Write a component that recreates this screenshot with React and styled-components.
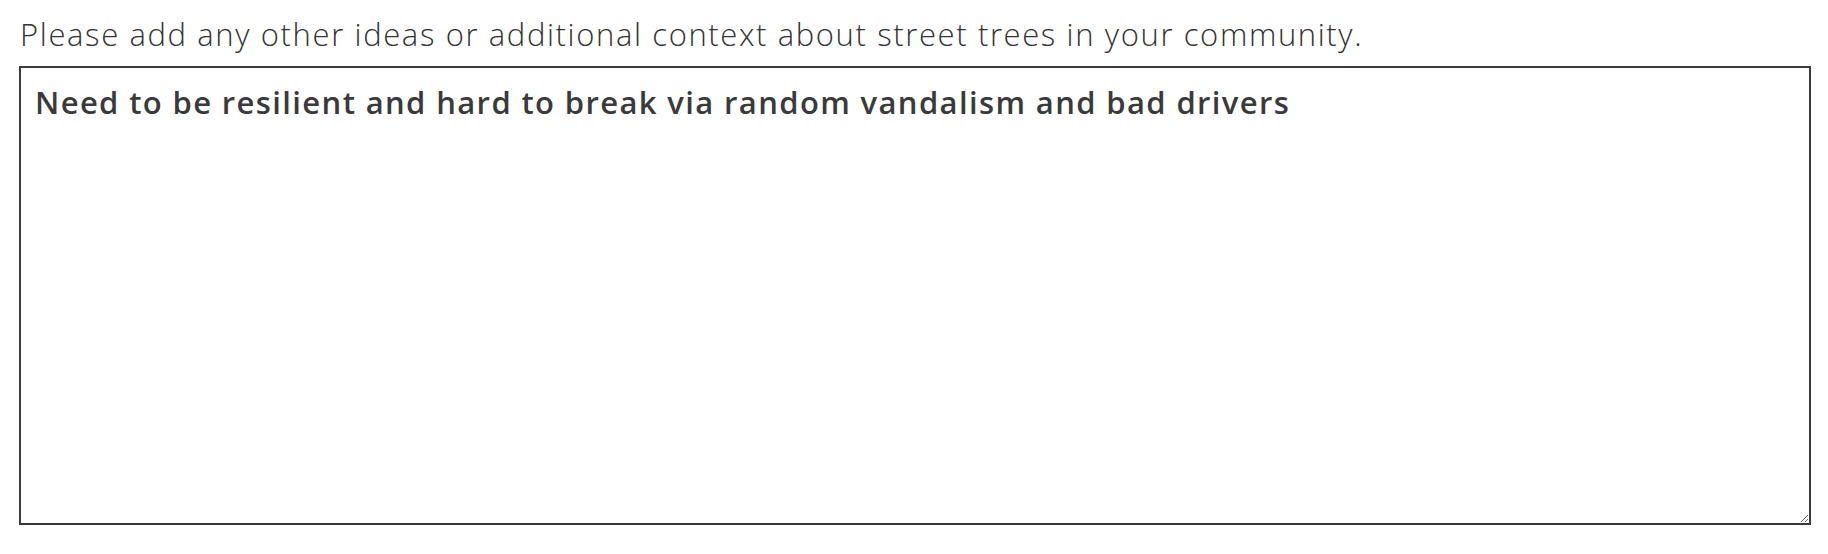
import React from "react";
import styled, { createGlobalStyle } from "styled-components";

const GlobalStyle = createGlobalStyle`
  html, body {
    margin: 0;
    padding: 0;
    background: #ffffff;
  }
`;

const QuestionWrap = styled.div`
  padding: 16px 17px 0 19px;
  display: flex;
  flex-direction: column;
  gap: 14px;
`;

const QuestionLabel = styled.label`
  font-family: "Open Sans", "Liberation Sans", sans-serif;
  font-weight: 300;
  font-size: 31px;
  line-height: 36px;
  letter-spacing: 1.62px;
  color: #333333;
  padding-left: 1px;
`;

const AnswerBox = styled.textarea`
  box-sizing: border-box;
  width: 100%;
  height: 459px;
  border: 2px solid #3b3b3b;
  border-radius: 0;
  padding: 14px 14px;
  font-family: "Open Sans", "Liberation Sans", sans-serif;
  font-weight: 600;
  font-size: 31px;
  line-height: 40px;
  letter-spacing: 1.37px;
  color: #3a3a3a;
  background: #ffffff;
  outline: none;
  resize: vertical;
`;

const App = () => {
  return (
    <>
      <GlobalStyle />
      <QuestionWrap>
        <QuestionLabel htmlFor="street-trees-other">
          Please add any other ideas or additional context about street trees in your community.
        </QuestionLabel>
        <AnswerBox
          id="street-trees-other"
          readOnly
          defaultValue="Need to be resilient and hard to break via random vandalism and bad drivers"
        />
      </QuestionWrap>
    </>
  );
};

export default App;
